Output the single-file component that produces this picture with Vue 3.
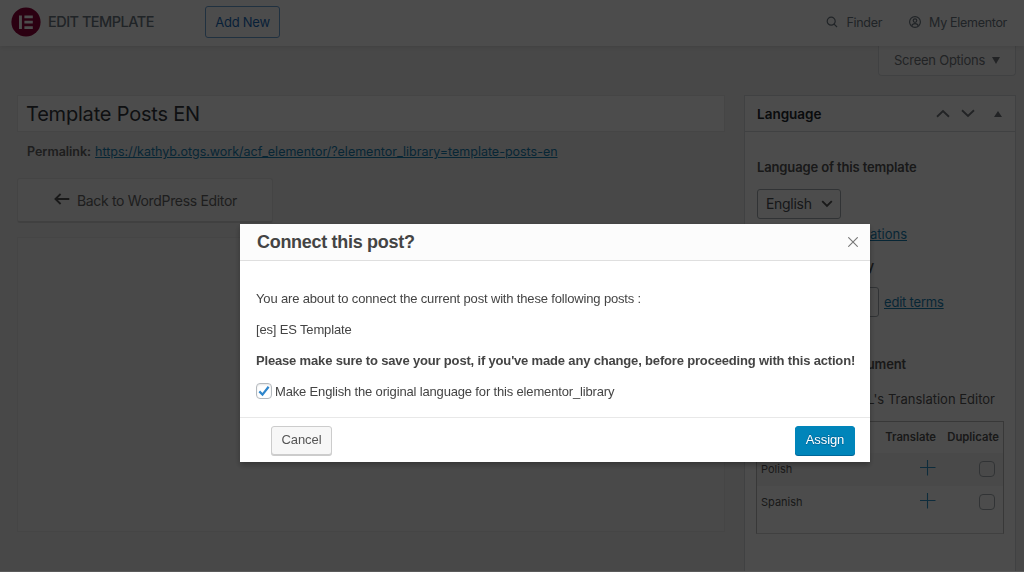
<script setup>
import { ref } from 'vue'

const showModal = ref(true)
const makeOriginal = ref(true)

const permalink = 'https://kathyb.otgs.work/acf_elementor/?elementor_library=template-posts-en'

const languages = ref([
    { name: 'Polish', duplicate: false },
    { name: 'Spanish', duplicate: false }
])

const closeModal = () => {
    showModal.value = false
}
</script>

<template>
    <div class="admin-page">
        <!-- Top bar -->
        <header class="top-bar">
            <svg class="logo" viewBox="0 0 30 30">
                <circle cx="15" cy="15" r="14.6" fill="#92003b" />
                <path d="M8 8.5h2.9v13.4H8zM13.4 8.5h8.4v2.7h-8.4zM13.4 13.8h8.4v2.7h-8.4zM13.4 19.2h8.4v2.7h-8.4z" fill="#fff" />
            </svg>
            <span class="page-title">EDIT TEMPLATE</span>
            <button type="button" class="add-new">Add New</button>
            <nav class="top-links">
                <span class="top-link finder">
                    <svg width="12" height="12" viewBox="0 0 12 12">
                        <circle cx="5.2" cy="5.2" r="4" />
                        <path d="M8.1 8.1l2.9 2.9" />
                    </svg>
                    <span>Finder</span>
                </span>
                <span class="top-link account">
                    <svg width="12" height="12" viewBox="0 0 12 12">
                        <circle cx="6" cy="6" r="5.4" />
                        <circle cx="6" cy="4.6" r="1.8" />
                        <path d="M2.8 9.8c.3-1.7 1.2-2.2 3.2-2.2s2.9.5 3.2 2.2" />
                    </svg>
                    <span>My Elementor</span>
                </span>
            </nav>
        </header>

        <div class="columns">
            <main class="main-column">
                <div class="post-title">Template Posts EN</div>
                <div class="permalink">
                    <strong>Permalink:</strong>
                    <a>{{ permalink }}</a>
                </div>
                <button type="button" class="back-button">
                    <svg width="16" height="12" viewBox="0 0 16 12">
                        <path d="M15.3 6H1.6M6.6 1L1.4 6l5.2 5" />
                    </svg>
                    <span>Back to WordPress Editor</span>
                </button>
                <div class="editor-area"></div>
            </main>

            <aside class="side-column">
                <div class="screen-options">
                    <span>Screen Options</span>
                    <svg width="8" height="7" viewBox="0 0 8 7"><path d="M0 0h8L4 7z" /></svg>
                </div>

                <section class="metabox">
                    <div class="metabox-header">
                        <h2>Language</h2>
                        <svg class="chevron" width="14" height="9" viewBox="0 0 14 9"><path d="M1 7.7l6-5.6 6 5.6" /></svg>
                        <svg class="chevron down" width="14" height="9" viewBox="0 0 14 9"><path d="M1 1.3l6 5.6 6-5.6" /></svg>
                        <svg class="toggle" width="8" height="6" viewBox="0 0 8 6"><path d="M0 6h8L4 0z" /></svg>
                    </div>
                    <div class="metabox-body">
                        <strong class="label">Language of this template</strong>
                        <div class="select">
                            <span>English</span>
                            <svg width="12" height="8" viewBox="0 0 12 8"><path d="M1.2 1.2L6 6l4.8-4.8" /></svg>
                        </div>
                        <a class="connect-link">translations</a>
                        <strong class="category">Category</strong>
                        <div class="terms">
                            <div class="terms-select"></div>
                            <a>edit terms</a>
                        </div>
                        <strong class="translate-label">Document</strong>
                        <div class="editor-name">WPML's Translation Editor</div>

                        <div class="languages">
                            <div class="row head">
                                <span></span>
                                <span>Translate</span>
                                <span>Duplicate</span>
                            </div>
                            <div v-for="lang in languages" :key="lang.name" class="row">
                                <span>{{ lang.name }}</span>
                                <svg width="16" height="16" viewBox="0 0 16 16"><path d="M7.5 0v15.5M0 7.5h15.5" /></svg>
                                <span class="box" @click="lang.duplicate = !lang.duplicate"></span>
                            </div>
                        </div>
                    </div>
                </section>
            </aside>
        </div>
    </div>

    <div v-if="showModal" class="backdrop">
        <div class="dialog">
            <div class="dialog-header">
                <h1>Connect this post?</h1>
                <svg class="close" width="10" height="10" viewBox="0 0 10 10" @click="closeModal">
                    <path d="M.3.3l9.4 9.4M9.7.3L.3 9.7" />
                </svg>
            </div>
            <div class="dialog-body">
                <p class="intro">You are about to connect the current post with these following posts :</p>
                <p class="post">[es] ES Template</p>
                <p class="warning">Please make sure to save your post, if you've made any change, before proceeding with this action!</p>
                <label class="original" @click="makeOriginal = !makeOriginal">
                    <span class="checkbox">
                        <svg v-if="makeOriginal" width="12" height="11" viewBox="0 0 12 11">
                            <path d="M1.3 5.4l3.2 3.2L10.6.8" />
                        </svg>
                    </span>
                    <span class="original-text">Make English the original language for this elementor_library</span>
                </label>
            </div>
            <div class="dialog-footer">
                <button type="button" class="btn" @click="closeModal">Cancel</button>
                <button type="button" class="btn primary" @click="closeModal">Assign</button>
            </div>
        </div>
    </div>
</template>

<style>
body {
  background: #f1f1f1;
  overflow: hidden;
}
</style>

<style scoped>
* {
  box-sizing: border-box;
}

h1, h2, p {
  margin: 0;
}

button {
  font-family: inherit;
}

svg {
  display: block;
  flex: none;
}

.admin-page {
  height: 572px;
  overflow: hidden;
  background: #f1f1f1;
  color: #555;
  font-family: Inter, "Liberation Sans", sans-serif;
  font-size: 13px;
  white-space: nowrap;
}

/* =====================================
   TOP BAR
===================================== */
.top-bar {
  position: relative;
  display: flex;
  align-items: center;
  height: 46px;
  padding: 0 17px 2px 11px;
  background: #fff;
  box-shadow: 0 1px 5px rgba(0, 0, 0, 0.1);
}

.logo {
  width: 30px;
  height: 30px;
}

.page-title {
  width: 164px;
  padding: 0 0 1px 7px;
  font-size: 14.5px;
  font-weight: 500;
  letter-spacing: -0.52px;
  color: #6d7882;
}

.add-new {
  width: 75px;
  height: 32px;
  padding: 0;
  border: 1px solid #6ba3d8;
  border-radius: 3px;
  background: #fff;
  color: #1a6cbd;
  font-size: 13px;
  letter-spacing: -0.25px;
}

.top-links {
  display: flex;
  margin-left: auto;
  font-size: 12.5px;
  letter-spacing: -0.3px;
  color: #6d7882;
}

.top-link {
  display: flex;
  align-items: center;
  gap: 8px;
}

.account {
  margin-left: 27px;
}

.top-link svg {
  fill: none;
  stroke: #6d7882;
  stroke-width: 1.2;
}

/* =====================================
   MAIN COLUMN
===================================== */
.columns {
  display: flex;
  padding: 0 8px 0 17px;
}

.main-column {
  width: 708px;
  padding-top: 49px;
}

.post-title {
  height: 37px;
  padding-left: 8px;
  border: 1px solid #e8e8e8;
  background: #fff;
  color: #32373c;
  font-size: 20px;
  line-height: 36px;
  letter-spacing: -0.2px;
}

.permalink {
  display: flex;
  gap: 4px;
  padding: 11px 0 0 10px;
  font-size: 12.5px;
  line-height: 17px;
  letter-spacing: -0.01px;
  color: #666;
}

.permalink strong {
  font-weight: 600;
}

a {
  color: #1a7fb3;
}

.permalink a,
.connect-link,
.terms a {
  text-decoration: underline;
}

.back-button {
  display: flex;
  align-items: center;
  gap: 7px;
  width: 256px;
  height: 45px;
  margin-top: 18px;
  padding: 0 0 0 36px;
  border: 1px solid #e3e3e3;
  border-bottom: 2px solid #d8d8d8;
  border-radius: 3px;
  background: #f7f7f7;
  color: #666;
  font-size: 14px;
  letter-spacing: -0.33px;
}

.back-button svg {
  margin-bottom: 3px;
  fill: none;
  stroke: #555;
  stroke-width: 1.8;
}

.editor-area {
  height: 295px;
  margin-top: 14px;
  border: 1px solid #e8e8e8;
  background: #f5f5f5;
}

/* =====================================
   SIDE COLUMN
===================================== */
.side-column {
  width: 272px;
  margin-left: 19px;
}

.screen-options {
  display: flex;
  align-items: center;
  gap: 7px;
  width: 138px;
  height: 30px;
  margin-left: auto;
  padding: 0 0 1px 15px;
  border: 1px solid #d8dbde;
  border-top: 0;
  border-radius: 0 0 4px 4px;
  background: #f9f9f9;
  color: #72777c;
  letter-spacing: -0.25px;
}

.screen-options svg,
.toggle {
  fill: #72777c;
}

.metabox {
  height: 500px;
  margin-top: 19px;
  border: 1px solid #d8dbde;
  background: #fff;
}

.metabox-header {
  display: flex;
  align-items: center;
  height: 36px;
  padding: 0 13px 0 12px;
  border-bottom: 1px solid #d8dbde;
}

h2 {
  flex: 1;
  font-size: 13.5px;
  font-weight: 600;
  color: #23282d;
}

.chevron {
  fill: none;
  stroke: #72777c;
  stroke-width: 1.9;
}

.chevron.down {
  margin-left: 11px;
}

.toggle {
  margin-left: 19px;
}

.metabox-body {
  display: flex;
  flex-direction: column;
  align-items: flex-start;
  padding: 26px 12px 0;
}

.metabox-body strong {
  font-weight: 600;
  line-height: 18px;
  letter-spacing: -0.14px;
  color: #555;
}

.select {
  display: flex;
  align-items: center;
  justify-content: space-between;
  width: 84px;
  height: 30px;
  margin-top: 13px;
  padding: 0 7px 1px 8px;
  border: 1px solid #a4abb1;
  border-radius: 3px;
  color: #4a4f54;
  font-size: 14px;
  letter-spacing: -0.3px;
}

.select svg {
  fill: none;
  stroke: #555;
  stroke-width: 1.9;
}

.connect-link {
  width: 150px;
  margin-top: 6px;
  text-align: right;
  line-height: 18px;
}

.metabox-body .category {
  width: 117px;
  margin-top: 14px;
  text-align: right;
}

.terms {
  display: flex;
  align-items: center;
  gap: 5px;
  margin-top: 12px;
}

.terms a {
  margin-bottom: 1px;
  letter-spacing: -0.2px;
}

.terms-select {
  width: 122px;
  height: 30px;
  border: 1px solid #a4abb1;
  border-radius: 3px;
}

.metabox-body .translate-label {
  width: 149px;
  margin-top: 38px;
  text-align: right;
}

.editor-name {
  width: 238px;
  margin-top: 17px;
  text-align: right;
  line-height: 18px;
}

.languages {
  width: 248px;
  height: 113px;
  margin: 13px 0 0 -1px;
  border: 1px solid #bcbcbc;
  border-bottom-color: #d8d8d8;
}

.row {
  display: grid;
  grid-template-columns: 122px 62px 62px;
  align-items: center;
  height: 32px;
  font-size: 11px;
}

.row > :first-child {
  padding-left: 4px;
}

.row:nth-child(2) {
  height: 33px;
  padding-bottom: 1px;
  background: #f6f6f6;
}

.row.head {
  height: 31px;
  padding-bottom: 1px;
  font-size: 11.3px;
  font-weight: 600;
}

.row.head span {
  text-align: right;
}

.row.head span:nth-child(2) {
  padding-right: 5px;
}

.row.head span:nth-child(3) {
  padding-right: 4px;
}

.row svg {
  margin: 0 0 2px 41px;
  fill: none;
  stroke: #2f95c8;
  stroke-width: 1.1;
}

.box {
  width: 16px;
  height: 16px;
  margin-left: 38px;
  border: 1px solid #a4abb1;
  border-radius: 4px;
}

/* =====================================
   MODAL
===================================== */
.backdrop {
  position: fixed;
  inset: 0;
  display: flex;
  justify-content: center;
  align-items: flex-start;
  padding: 224px 0 0 86px;
  background: rgba(0, 0, 0, 0.7);
  border-bottom: 1px solid #5a5a5a;
}

.dialog {
  width: 630px;
  height: 238px;
  background: #fff;
  color: #444;
  font-family: "Liberation Sans", Arial, sans-serif;
  font-size: 13px;
  white-space: nowrap;
  box-shadow: 0 3px 6px rgba(0, 0, 0, 0.3);
}

.dialog-header {
  display: flex;
  align-items: center;
  justify-content: space-between;
  height: 37px;
  padding: 0 12px 0 17px;
  border-bottom: 1px solid #dfdfdf;
  background: #fcfcfc;
}

h1 {
  padding-top: 1px;
  font-size: 18px;
  line-height: 35px;
  letter-spacing: -0.3px;
}

.close {
  fill: none;
  stroke: #777;
  stroke-width: 1.1;
}

.dialog-body {
  height: 156px;
  padding: 28px 15px 0 16px;
  line-height: 20px;
  letter-spacing: -0.16px;
}

.post,
.warning {
  margin-top: 11px;
}

.warning {
  font-weight: bold;
  letter-spacing: -0.17px;
}

.original {
  display: flex;
  align-items: center;
  gap: 3px;
  margin-top: 11px;
}

.checkbox {
  display: flex;
  align-items: center;
  justify-content: center;
  width: 16px;
  height: 16px;
  margin-bottom: 2px;
  border: 1px solid #b4b9be;
  border-radius: 4px;
  box-shadow: inset 0 1px 2px rgba(0, 0, 0, 0.1);
}

.checkbox path {
  fill: none;
  stroke: #2e86cc;
  stroke-width: 2.2;
}

.dialog-footer {
  display: flex;
  justify-content: space-between;
  height: 45px;
  padding: 8px 15px 0 31px;
  border-top: 1px solid #e8e8e8;
}

.btn {
  width: 61px;
  height: 29px;
  padding: 0 0 2px;
  border: 1px solid #ccc;
  border-radius: 3px;
  background: #f7f7f7;
  box-shadow: 0 1px 0 #ccc;
  color: #555;
  font-size: 13px;
  letter-spacing: -0.1px;
}

.btn.primary {
  width: 60px;
  border-color: #0085ba;
  background: #0085ba;
  box-shadow: 0 1px 0 #006799;
  color: #fff;
  text-shadow: 0 -1px 1px #006799, 0 1px 1px #006799;
}
</style>
